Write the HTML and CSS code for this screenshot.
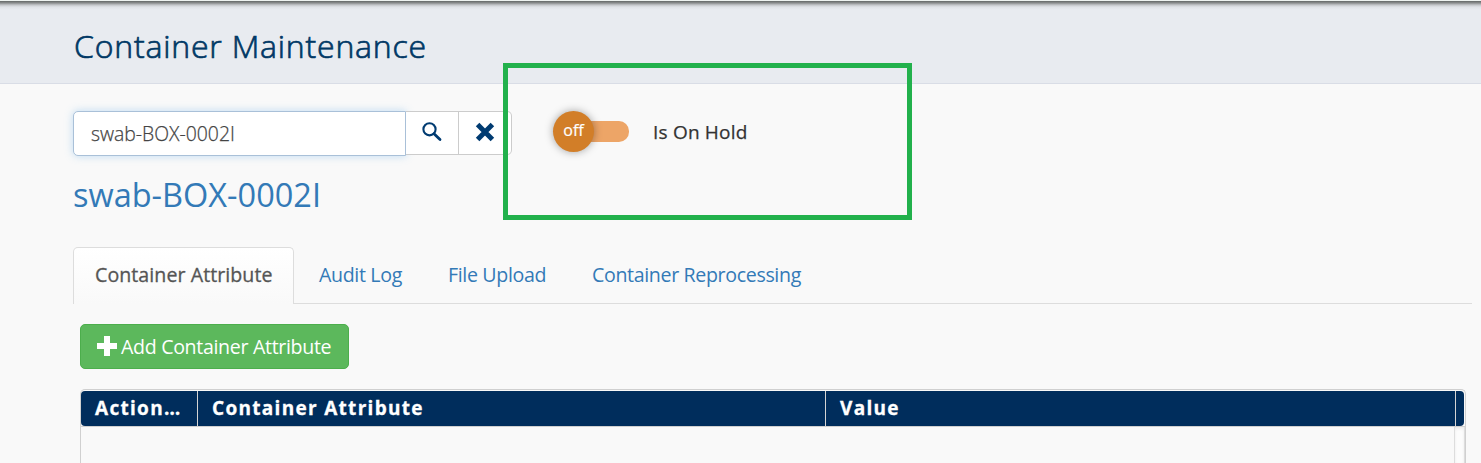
FILE: index.html
```html
<!DOCTYPE html>
<html lang="en">
<head>
<meta charset="utf-8">
<title>Container Maintenance</title>
<link rel="stylesheet" href="styles.css">
</head>
<body>
<header class="page-header"><h1 class="page-title">Container Maintenance</h1></header>
<main class="content">
  <div class="toolbar">
    <div class="search">
      <input class="search-input" type="text" value="swab-BOX-0002I" aria-label="Container">
      <button class="search-btn" aria-label="Search"><svg width="20" height="20" viewBox="0 0 20 20"><circle cx="7.5" cy="7.3" r="6.1" fill="none" stroke="#003b71" stroke-width="2.1"/><path d="M12 11.8l6 5.8" stroke="#003b71" stroke-width="2.8" stroke-linecap="round"/></svg></button>
      <button class="search-btn search-clear" aria-label="Clear"><svg width="20" height="20" viewBox="0 0 20 20"><path d="M2.6 2.6l14.8 14.8M17.4 2.6L2.6 17.4" stroke="#003b71" stroke-width="5"/></svg></button>
    </div>
    <div class="hold">
      <div class="switch"><span class="knob">off</span><span class="track"></span></div>
      <span class="hold-label">Is On Hold</span>
    </div>
  </div>
  <h2 class="container-name">swab-BOX-0002I</h2>
  <nav class="tabs">
    <a class="tab active">Container Attribute</a>
    <a class="tab audit">Audit Log</a>
    <a class="tab upload">File Upload</a>
    <a class="tab reprocess">Container Reprocessing</a>
  </nav>
  <section class="panel">
    <button class="add-btn"><svg class="plus" width="20" height="20" viewBox="0 0 20 20"><path d="M7 0h6v7h7v6h-7v7H7v-7H0V7h7z" fill="#fff"/></svg><span class="add-text">Add Container Attribute</span></button>
    <div class="grid">
      <div class="grid-head">
        <div class="cell action"><span>Action…</span></div>
        <div class="cell attribute"><span>Container Attribute</span></div>
        <div class="cell value"><span>Value</span></div>
        <div class="cell gutter"></div>
      </div>
      <div class="grid-body"><div class="scrollbar"></div></div>
    </div>
  </section>
</main>
<div class="highlight"></div>
</body>
</html>
```
FILE: styles.css
```css
* { box-sizing: border-box; }
body { margin: 0; height: 463px; overflow: hidden; position: relative; background: #f9f9f9; font-family: "Open Sans", sans-serif; color: #333; }
button { font: inherit; padding: 0; }
.page-header { height: 84px; padding-left: 74px; border-bottom: 1px solid #d9dde6; background: linear-gradient(#eef3f0 0, #eef3f0 1px, #636766 1px, #8b8e8f 3px, #c3c6c9 5px, #dfe3e7 7px, #e8ebf0 10px); }
.page-title { margin: 0; padding-top: 24px; font-size: 32px; line-height: 44px; font-weight: 300; letter-spacing: .8px; color: #003865; white-space: nowrap; -webkit-text-stroke: .7px #003865; }
.content { padding: 27px 9px 0 73px; }
.toolbar { display: flex; height: 45px; }
.search { display: flex; width: 439px; }
.search-input { width: 333px; height: 45px; padding: 0 17px 1px; border: 1px solid #a9c0d8; border-radius: 5px 0 0 5px; background: #fff; box-shadow: 0 0 9px rgba(102,175,233,.4); font: 300 19.4px "Open Sans", sans-serif; color: #444; -webkit-text-stroke: .25px #444; }
.search-btn { display: flex; align-items: center; justify-content: center; width: 53px; height: 44px; margin: 0; padding-bottom: 2px; border: 1px solid #ccc; border-left: 0; background: #fff; }
.search-clear { border-radius: 0 5px 5px 0; }
.hold { display: flex; align-items: center; margin: -5px 0 0 41px; }
.switch { display: flex; align-items: center; width: 76px; }
.knob { z-index: 1; width: 41px; height: 41px; border-radius: 50%; background: #d27e28; box-shadow: 0 0 8px rgba(0,0,0,.35); color: #fff; font-size: 16px; line-height: 39px; text-align: center; -webkit-text-stroke: .2px #fff; }
.track { flex: 1; height: 21px; margin-left: -20px; border-radius: 0 10px 10px 0; background: #eda567; }
.hold-label { margin: 2px 0 0 24px; font-size: 19px; letter-spacing: .2px; color: #333; white-space: nowrap; -webkit-text-stroke: .25px #333; }
.container-name { margin: 17px 0 0; font-size: 32.5px; line-height: 44px; font-weight: 400; color: #337ab7; }
.tabs { display: flex; height: 57px; margin-top: 30px; border-bottom: 1px solid #ddd; }
.tab { padding-top: 15px; font-size: 19.6px; letter-spacing: -.35px; line-height: 25px; color: #337ab7; white-space: nowrap; }
.active { width: 221px; height: 57px; padding: 14px 0 0 21px; border: 1px solid #ddd; border-bottom: 0; border-radius: 5px 5px 0 0; background: linear-gradient(#fff, #f9f9f9); color: #555; letter-spacing: .06px; -webkit-text-stroke: .3px #555; }
.audit { width: 129px; padding-left: 25px; }
.upload { width: 144px; padding-left: 25px; }
.reprocess { padding-left: 25px; }
.panel { padding: 20px 6px 0 7px; }
.add-btn { display: flex; align-items: center; width: 269px; height: 45px; padding-left: 16px; border: 1px solid #4cae4c; border-radius: 5px; background: #5cb85c; color: #fff; font-size: 19.6px; letter-spacing: -.33px; white-space: nowrap; }
.plus { margin-bottom: 2px; }
.add-text { margin: -1px 0 0 4px; }
.grid { height: 74px; margin-top: 20px; padding-top: 1px; border: 1px solid #d0d0d0; border-bottom: 0; border-radius: 5px 5px 0 0; }
.grid-head { display: flex; height: 35px; margin-right: 1px; overflow: hidden; border-radius: 4px; background: #002d5c; color: #fff; font-size: 19px; font-weight: 700; line-height: 34px; letter-spacing: 1.3px; white-space: nowrap; -webkit-text-stroke: .3px #fff; }
.cell { padding-left: 14px; border-right: 1px solid #d4d4d4; }
.action { width: 117px; }
.attribute { width: 628px; }
.value { width: 630px; }
.gutter { flex: 1; padding: 0; border: 0; }
.grid-body { display: flex; justify-content: flex-end; height: 37px; border-top: 1px solid #d0d0d0; }
.scrollbar { width: 11px; border: 1px solid #ddd; border-top: 0; border-bottom: 0; background: #fcfcfc; box-shadow: inset 0 2px 3px rgba(0,0,0,.07); }
.highlight { position: absolute; left: 503px; top: 63px; width: 409px; height: 157px; border: 5px solid #22b14c; }
```
